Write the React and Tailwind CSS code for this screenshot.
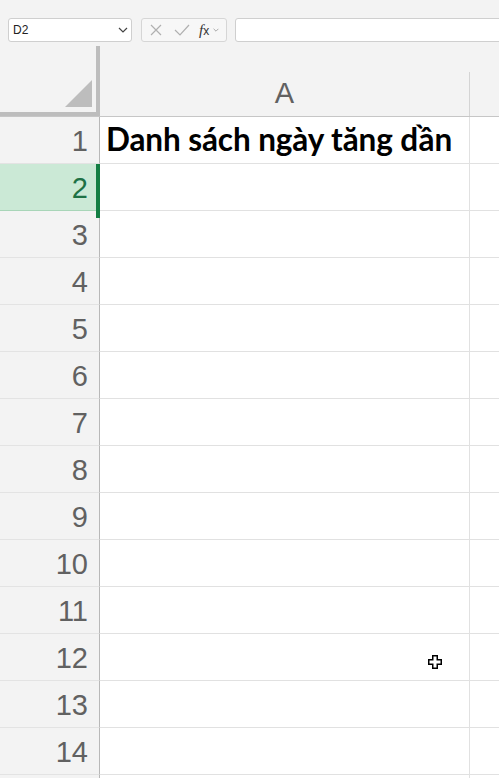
import React from "react";

const rows = [1,2,3,4,5,6,7,8,9,10,11,12,13,14,15];

function Chevron({ className }) {
  return (
    <svg className={className} viewBox="0 0 10 6" fill="none" stroke="#444" strokeWidth="1.2">
      <path d="M1 1 L5 5 L9 1" />
    </svg>
  );
}

export default function App() {
  return (
    <div className="relative w-[499px] h-[778px] overflow-hidden bg-[#f3f3f3]" style={{ fontFamily: '"Liberation Sans", Arial, sans-serif' }}>
      {/* formula bar */}
      <div className="flex items-center h-[24px] mt-[18px] pl-[8px]">
        <div className="flex items-center justify-between w-[124px] h-[24px] bg-white border border-[#cfcfcf] rounded-[3px] pl-[4px] pr-[3px]">
          <span className="text-[12px] text-[#222]">D2</span>
          <Chevron className="w-[10px] h-[6px]" />
        </div>
        <div className="flex items-center w-[86px] h-[24px] ml-[9px] bg-[#f7f7f7] border border-[#d6d6d6] rounded-[3px] pl-[7px]">
          <svg className="w-[14px] h-[14px]" viewBox="0 0 14 14" stroke="#b0b0b0" strokeWidth="1.2" fill="none">
            <path d="M2 2 L12 12 M12 2 L2 12" />
          </svg>
          <svg className="w-[16px] h-[14px] ml-[11px]" viewBox="0 0 16 14" stroke="#b0b0b0" strokeWidth="1.2" fill="none">
            <path d="M1 7 L6 12 L15 2" />
          </svg>
          <span className="ml-[9px] text-[15px] italic text-[#333] leading-none" style={{ fontFamily: '"Liberation Serif", serif' }}>f<span className="text-[12px] not-italic" style={{ fontFamily: '"Liberation Sans", sans-serif' }}>x</span></span>
          <svg className="w-[6px] h-[4px] ml-[4px]" viewBox="0 0 10 6" fill="none" stroke="#999" strokeWidth="1.4">
            <path d="M1 1 L5 5 L9 1" />
          </svg>
        </div>
        <div className="flex-1 h-[24px] ml-[8px] -mr-[10px] bg-white border border-[#cfcfcf] rounded-[3px]" />
      </div>

      {/* column header */}
      <div className="flex h-[71px] mt-[4px] border-b border-[#c6c6c6]">
        <div className="relative w-[100px] h-[70px] border-r-[4px] border-b-[4px] border-[#bdbdbd]">
          <svg className="absolute right-[4px] bottom-[5px] w-[27px] h-[27px]" viewBox="0 0 27 27">
            <polygon points="27,0 27,27 0,27" fill="#bdbdbd" />
          </svg>
        </div>
        <div className="w-[369px] flex items-end justify-center pb-[8px]">
          <span className="text-[29px] leading-none text-[#616161]">A</span>
        </div>
        <div className="flex-1 mt-[26px] border-l border-[#d4d4d4]" />
      </div>

      {/* rows */}
      {rows.map((n) => {
        const sel = n === 2;
        return (
          <div key={n} className="flex h-[47px]">
            <div className={`relative w-[100px] flex items-end justify-end pr-[11px] pb-[7px] border-r border-b ${sel ? "bg-[#cbe9d6] border-b-[#a8d5b8] border-r-[#b8b8b8]" : "bg-[#f3f3f3] border-b-[#e3e3e3] border-r-[#b8b8b8]"}`}>
              {n < 15 && <span className={`text-[29px] leading-none ${sel ? "text-[#1e7145]" : "text-[#616161]"}`}>{n}</span>}
              {sel && <div className="absolute right-[-1px] top-0 w-[4px] h-[54px] bg-[#137e43] z-10" />}
            </div>
            <div className="w-[369px] flex items-center bg-white border-b border-[#e1e1e1] pl-[6px]">
              {n === 1 && (
                <span className="text-[31.5px] font-bold text-black leading-none tracking-[-0.1px]" style={{ fontFamily: 'Lato, "Noto Sans", sans-serif' }}>
                  Danh sách ngày tăng dần
                </span>
              )}
            </div>
            <div className="flex-1 bg-white border-l border-b border-[#e1e1e1]" />
          </div>
        );
      })}

      {/* cursor */}
      <svg className="absolute left-[427px] top-[654px] w-[16px] h-[16px]" viewBox="0 0 16 16">
        <path d="M5 1 H11 V5 H15 V11 H11 V15 H5 V11 H1 V5 H5 Z" fill="black" />
        <path d="M6.5 2.5 H9.5 V6.5 H13.5 V9.5 H9.5 V13.5 H6.5 V9.5 H2.5 V6.5 H6.5 Z" fill="white" />
      </svg>
    </div>
  );
}
